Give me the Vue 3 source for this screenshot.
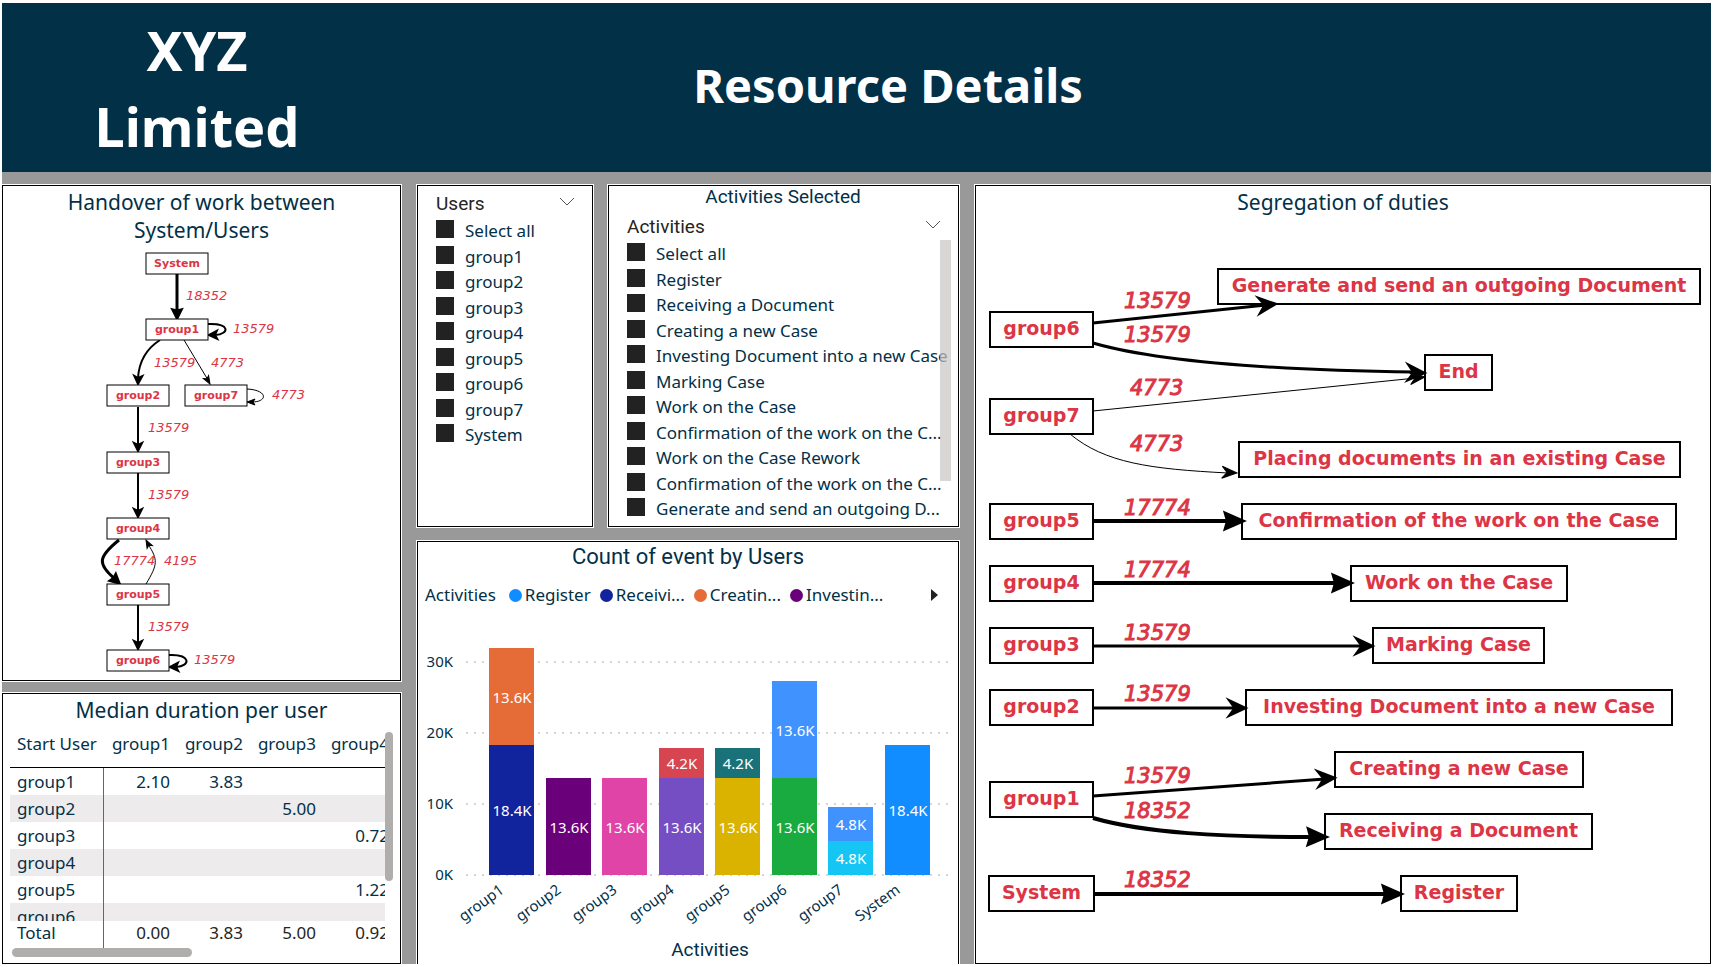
<script setup>
import { ref } from 'vue'

const users = ['Select all', 'group1', 'group2', 'group3', 'group4', 'group5', 'group6', 'group7', 'System']
const activities = [
  'Select all',
  'Register',
  'Receiving a Document',
  'Creating a new Case',
  'Investing Document into a new Case',
  'Marking Case',
  'Work on the Case',
  'Confirmation of the work on the C...',
  'Work on the Case Rework',
  'Confirmation of the work on the C...',
  'Generate and send an outgoing D...',
]
const pickedUsers = ref(users.map((_, i) => i))
const pickedActivities = ref(activities.map((_, i) => i))

// Median duration matrix
const columns = ['group1', 'group2', 'group3', 'group4']
const rows = [
  { name: 'group1', cells: ['2.10', '3.83', '', ''] },
  { name: 'group2', cells: ['', '', '5.00', ''] },
  { name: 'group3', cells: ['', '', '', '0.72'] },
  { name: 'group4', cells: ['', '', '', ''] },
  { name: 'group5', cells: ['', '', '', '1.22'] },
  { name: 'group6', cells: ['', '', '', ''] },
]
const totals = ['0.00', '3.83', '5.00', '0.92']

// Stacked column chart
const legend = [
  { label: 'Register', color: '#118dff' },
  { label: 'Receivi...', color: '#12239e' },
  { label: 'Creatin...', color: '#e66c37' },
  { label: 'Investin...', color: '#6b007b' },
]
const baseY = 875
const perK = 7.11
const stacks = [
  { name: 'group1', parts: [[18.352, '#12239e', '18.4K'], [13.579, '#e66c37', '13.6K']] },
  { name: 'group2', parts: [[13.579, '#6b007b', '13.6K']] },
  { name: 'group3', parts: [[13.579, '#e044a7', '13.6K']] },
  { name: 'group4', parts: [[13.579, '#744ec2', '13.6K'], [4.195, '#d64550', '4.2K']] },
  { name: 'group5', parts: [[13.579, '#d9b300', '13.6K'], [4.195, '#197278', '4.2K']] },
  { name: 'group6', parts: [[13.579, '#1aab40', '13.6K'], [13.579, '#4092ff', '13.6K']] },
  { name: 'group7', parts: [[4.773, '#15c6f4', '4.8K'], [4.773, '#4092ff', '4.8K']] },
  { name: 'System', parts: [[18.352, '#118dff', '18.4K']] },
]
const bars = stacks.map((s, i) => {
  const x = Math.round(489 + i * 56.5)
  let y = baseY
  const parts = s.parts.map(([value, color, label]) => {
    const bottom = y
    y = Math.round(bottom - value * perK)
    return { y, height: bottom - y, color, label, mid: Math.round((y + bottom) / 2) }
  })
  return { name: s.name, x, parts }
})
const ticks = [0, 10, 20, 30].map((k) => ({ label: k + 'K', y: Math.round(baseY - k * perK) }))

// Handover graph
const flowNodes = [
  { t: 'System', x: 146, y: 253, w: 62 },
  { t: 'group1', x: 146, y: 319, w: 62 },
  { t: 'group2', x: 107, y: 385, w: 62 },
  { t: 'group7', x: 185, y: 385, w: 62 },
  { t: 'group3', x: 107, y: 452, w: 62 },
  { t: 'group4', x: 107, y: 518, w: 62 },
  { t: 'group5', x: 107, y: 584, w: 62 },
  { t: 'group6', x: 107, y: 650, w: 62 },
]
const flowEdges = [
  { d: 'M177 274V312', tip: [177, 318], a: 90, w: 3 },
  { d: 'M208 324C230 323 230 334 215 335', tip: [209, 335], a: 178, w: 2 },
  { d: 'M160 340C146 349 139 362 138 378', tip: [138, 384], a: 92, w: 2 },
  { d: 'M184 340L208 380', tip: [210, 384], a: 60, w: 1 },
  { d: 'M247 389C268 390 268 402 252 402', tip: [247, 402], a: 180, w: 1 },
  { d: 'M138 407V445', tip: [138, 451], a: 90, w: 2 },
  { d: 'M138 473V511', tip: [138, 517], a: 90, w: 2 },
  { d: 'M119 540C98 557 97 564 115 579', tip: [119, 583], a: 42, w: 3 },
  { d: 'M146 584C158 564 158 560 148 544', tip: [146, 540], a: 242, w: 1 },
  { d: 'M138 605V643', tip: [138, 649], a: 90, w: 2 },
  { d: 'M169 655C191 654 191 666 176 667', tip: [170, 667], a: 178, w: 2 },
]
const flowLabels = [
  ['18352', 186, 300], ['13579', 233, 333], ['13579', 154, 367], ['4773', 211, 367],
  ['4773', 272, 399], ['13579', 148, 432], ['13579', 148, 499], ['17774', 114, 565],
  ['4195', 164, 565], ['13579', 148, 631], ['13579', 194, 664],
]

// Segregation graph
const dutyNodes = [
  { t: 'group6', x: 990, y: 312, w: 103 },
  { t: 'group7', x: 990, y: 399, w: 103 },
  { t: 'group5', x: 990, y: 504, w: 103 },
  { t: 'group4', x: 990, y: 566, w: 103 },
  { t: 'group3', x: 990, y: 628, w: 103 },
  { t: 'group2', x: 990, y: 690, w: 103 },
  { t: 'group1', x: 990, y: 782, w: 103 },
  { t: 'System', x: 989, y: 876, w: 105 },
  { t: 'Generate and send an outgoing Document', x: 1218, y: 269, w: 482 },
  { t: 'End', x: 1425, y: 355, w: 67 },
  { t: 'Placing documents in an existing Case', x: 1239, y: 442, w: 441 },
  { t: 'Confirmation of the work on the Case', x: 1242, y: 504, w: 434 },
  { t: 'Work on the Case', x: 1351, y: 566, w: 216 },
  { t: 'Marking Case', x: 1373, y: 628, w: 171 },
  { t: 'Investing Document into a new Case', x: 1246, y: 690, w: 426 },
  { t: 'Creating a new Case', x: 1335, y: 752, w: 248 },
  { t: 'Receiving a Document', x: 1325, y: 814, w: 267 },
  { t: 'Register', x: 1401, y: 876, w: 116 },
]
const dutyEdges = [
  { d: 'M1093 323L1266 305', tip: [1275, 304], a: -6, w: 3 },
  { d: 'M1093 343C1155 361 1270 370 1415 372', tip: [1424, 373], a: 2, w: 3 },
  { d: 'M1093 411L1416 378', tip: [1425, 377], a: -6, w: 1 },
  { d: 'M1070 434C1105 463 1150 469 1228 473', tip: [1237, 473], a: 3, w: 1 },
  { d: 'M1093 521H1232', tip: [1242, 521], a: 0, w: 4 },
  { d: 'M1093 583H1340', tip: [1350, 583], a: 0, w: 4 },
  { d: 'M1093 646H1362', tip: [1372, 646], a: 0, w: 3 },
  { d: 'M1093 708H1235', tip: [1245, 708], a: 0, w: 3 },
  { d: 'M1093 796L1325 779', tip: [1334, 778], a: -4, w: 3 },
  { d: 'M1093 818C1145 833 1220 837 1315 837', tip: [1325, 837], a: 1, w: 4 },
  { d: 'M1094 894H1390', tip: [1400, 894], a: 0, w: 4 },
]
const dutyLabels = [
  ['13579', 1124, 308], ['13579', 1124, 342], ['4773', 1130, 395], ['4773', 1130, 451],
  ['17774', 1124, 515], ['17774', 1124, 577], ['13579', 1124, 640], ['13579', 1124, 701],
  ['13579', 1124, 783], ['18352', 1124, 818], ['18352', 1124, 887],
]
const turn = (e) => `translate(${e.tip[0]} ${e.tip[1]}) rotate(${e.a})`
const dutyHeads = {
  1: 'M0 0L-15 -6L-10 0L-15 6Z',
  3: 'M0 0L-15 -7L-10 0L-15 7Z',
  4: 'M0 0L-16 -7L-14 0L-16 7Z',
}
const flowHeads = {
  1: 'M0 0L-8 -3L-6 0L-8 3Z',
  2: 'M0 0L-8 -4L-6 0L-8 4Z',
  3: 'M0 0L-8 -4L-7 0L-8 4Z',
}
</script>

<template>
  <div class="page">
    <header class="banner">
      <p class="company">XYZ<br />Limited</p>
      <h1>Resource Details</h1>
    </header>

    <main class="board">
      <div class="column left">
        <section class="panel">
          <h2>Handover of work between<br />System/Users</h2>
          <svg class="graph" viewBox="3 244 397 436" role="img" aria-label="Handover of work graph">
            <g v-for="(e, i) in flowEdges" :key="i" class="edge" :stroke-width="e.w">
              <path :d="e.d" fill="none" />
              <path :transform="turn(e)" :d="flowHeads[e.w]" />
            </g>
            <g v-for="n in flowNodes" :key="n.t">
              <rect class="node thin" :x="n.x" :y="n.y" :width="n.w" height="21" />
              <text class="node-text small" :x="n.x + n.w / 2" :y="n.y + 14">{{ n.t }}</text>
            </g>
            <text v-for="([t, x, y], i) in flowLabels" :key="'l' + i" class="edge-text small" :x="x" :y="y">{{ t }}</text>
          </svg>
        </section>

        <section class="panel matrix">
          <h2>Median duration per user</h2>
          <div class="matrix-body">
            <div class="clip rows">
              <table>
                <colgroup><col class="first" /><col v-for="c in columns" :key="c" class="val" /></colgroup>
                <thead>
                  <tr><th scope="col">Start User</th><th v-for="c in columns" :key="c" scope="col">{{ c }}</th></tr>
                </thead>
                <tbody>
                  <tr v-for="r in rows" :key="r.name">
                    <th scope="row">{{ r.name }}</th>
                    <td v-for="(c, i) in r.cells" :key="i">{{ c }}</td>
                  </tr>
                </tbody>
              </table>
            </div>
            <div class="clip">
              <table class="total">
                <colgroup><col class="first" /><col v-for="c in columns" :key="c" class="val" /></colgroup>
                <tbody>
                  <tr><th scope="row">Total</th><td v-for="(c, i) in totals" :key="i">{{ c }}</td></tr>
                </tbody>
              </table>
            </div>
            <span class="bar-v"></span>
          </div>
          <div class="bar-h"></div>
        </section>
      </div>

      <div class="column middle">
        <div class="slicers">
          <section class="panel slicer">
            <div class="slicer-head">
              <span>Users</span>
              <button type="button" aria-label="Toggle users"><svg viewBox="0 0 16 9"><path d="M1 1L8 8L15 1" /></svg></button>
            </div>
            <ul>
              <li v-for="(u, i) in users" :key="i">
                <label><input v-model="pickedUsers" type="checkbox" :value="i" />{{ u }}</label>
              </li>
            </ul>
          </section>

          <section class="panel slicer">
            <h3>Activities Selected</h3>
            <div class="slicer-head">
              <span>Activities</span>
              <button type="button" aria-label="Toggle activities"><svg viewBox="0 0 16 9"><path d="M1 1L8 8L15 1" /></svg></button>
            </div>
            <div class="scroller">
              <ul>
                <li v-for="(a, i) in activities" :key="i">
                  <label><input v-model="pickedActivities" type="checkbox" :value="i" />{{ a }}</label>
                </li>
              </ul>
              <span class="track"></span>
            </div>
          </section>
        </div>

        <section class="panel chart">
          <h2 class="din">Count of event by Users</h2>
          <div class="legend">
            <span class="legend-title">Activities</span>
            <span v-for="l in legend" :key="l.label" class="key"><i :style="{ background: l.color }"></i>{{ l.label }}</span>
            <button type="button" aria-label="More"><svg viewBox="0 0 7 12"><path d="M0 0L7 6L0 12Z" /></svg></button>
          </div>
          <svg class="graph" viewBox="418 612 540 352" role="img" aria-label="Count of event by Users">
            <g v-for="t in ticks" :key="t.label">
              <line class="grid" x1="467" x2="950" :y1="t.y" :y2="t.y" />
              <text class="axis" x="453" :y="t.y + 5" text-anchor="end">{{ t.label }}</text>
            </g>
            <g v-for="b in bars" :key="b.name">
              <template v-for="(p, i) in b.parts" :key="i">
                <rect :x="b.x" :y="p.y" width="45" :height="p.height" :fill="p.color" />
                <text class="value" :x="b.x + 23" :y="p.mid + 6">{{ p.label }}</text>
              </template>
              <text class="axis" text-anchor="end" :transform="`translate(${b.x + 16} 892) rotate(-36)`">{{ b.name }}</text>
            </g>
            <text class="axis-title" x="710" y="956">Activities</text>
          </svg>
        </section>
      </div>

      <section class="panel">
        <h2>Segregation of duties</h2>
        <svg class="graph" viewBox="976 216 734 747" role="img" aria-label="Segregation of duties graph">
          <g v-for="n in dutyNodes" :key="n.t">
            <rect class="node" :x="n.x" :y="n.y" :width="n.w" height="35" />
            <text class="node-text" :x="n.x + n.w / 2" :y="n.y + 23">{{ n.t }}</text>
          </g>
          <g v-for="(e, i) in dutyEdges" :key="i" class="edge" :stroke-width="e.w">
            <path :d="e.d" fill="none" />
            <path :transform="turn(e)" :d="dutyHeads[e.w]" />
          </g>
          <text v-for="([t, x, y], i) in dutyLabels" :key="'l' + i" class="edge-text" :x="x" :y="y">{{ t }}</text>
        </svg>
      </section>
    </main>
  </div>
</template>

<style>
body {
  margin: 0;
  background: #fff;
}
</style>

<style scoped>
.page {
  box-sizing: border-box;
  min-height: 100vh;
  padding: 3px 6px 3px 2px;
  display: grid;
  grid-template-rows: auto 1fr;
  font-family: "Noto Sans", "Open Sans", sans-serif;
  color: #023047;
}
h1, h2, h3, p, ul {
  margin: 0;
  padding: 0;
}
.banner {
  display: grid;
  grid-template-columns: 390fr 992fr 327fr;
  align-items: center;
  padding: 9px 0 8px;
  background: #023047;
  color: #fff;
  text-align: center;
  font-weight: 700;
}
.company {
  font-size: 54px;
  line-height: 76px;
}
h1 {
  padding-bottom: 6px;
  font-size: 47px;
  line-height: 68px;
}
.board {
  display: grid;
  grid-template-columns: 399fr 542fr 736fr;
  gap: 16px;
  padding-top: 13px;
  background: #999;
}
.column {
  display: grid;
  min-width: 0;
}
.left {
  grid-template-rows: 496fr 271fr;
  gap: 12px;
}
.middle {
  grid-template-rows: 342fr 423fr;
  gap: 14px;
}
.slicers {
  display: grid;
  grid-template-columns: 176fr 351fr;
  gap: 15px;
}
.panel {
  box-sizing: border-box;
  min-width: 0;
  border: 1px solid #000;
  background: #fff;
  box-shadow: 0 0 0 1px #fff;
}
h2 {
  padding-top: 2px;
  font-size: 21px;
  font-weight: 400;
  line-height: 28px;
  text-align: center;
}
.graph {
  display: block;
  width: 100%;
  height: auto;
}
.node {
  fill: #fff;
  stroke: #000;
  stroke-width: 2;
}
.node.thin {
  stroke-width: 1;
}
.node-text {
  font: 700 19px "DejaVu Sans", sans-serif;
  fill: #dc3545;
  text-anchor: middle;
}
.edge-text {
  font: italic 400 21px "DejaVu Sans", sans-serif;
  fill: #dc3545;
  stroke: #dc3545;
  stroke-width: 1;
}
.node-text.small {
  font-size: 11px;
}
.edge-text.small {
  font-size: 13px;
  stroke: none;
}
.edge {
  stroke: #000;
}

/* Matrix */
.matrix {
  display: flex;
  flex-direction: column;
  padding: 0 7px 6px;
}
.matrix-body {
  position: relative;
  padding: 6px 8px 0 0;
  flex: 1;
  display: flex;
  flex-direction: column;
}
.clip {
  overflow: hidden;
}
.rows {
  flex: 1 1 0;
  min-height: 180px;
}
table {
  width: 386px;
  table-layout: fixed;
  border-collapse: separate;
  border-spacing: 0;
  font-size: 17px;
  line-height: 27px;
}
.first {
  width: 94px;
}
th, td {
  padding: 0 7px 0 0;
  font-weight: 400;
  text-align: right;
  white-space: nowrap;
  height: 27px;
}
th:first-child {
  padding-left: 7px;
  padding-right: 0;
  text-align: left;
}
thead th {
  height: 38px;
  padding-bottom: 10px;
  box-sizing: border-box;
  border-bottom: 1px solid #000;
}
tbody th {
  border-right: 1px solid #666;
}
tbody tr:nth-child(even) {
  background: #edebeb;
}
.total th,
.total td {
  height: 24px;
  padding-bottom: 3px;
  line-height: 24px;
}
.total td {
  color: #252423;
}
.bar-v {
  position: absolute;
  top: 8px;
  right: 0;
  width: 8px;
  height: 149px;
  border-radius: 5px;
  background: #b0aead;
}
.bar-h {
  width: 180px;
  height: 9px;
  margin-left: 2px;
  border-radius: 5px;
  background: #b0aead;
}

/* Slicers */
.slicer {
  padding: 5px 7px 0 18px;
}
h3 {
  margin: -6px 0 5px -12px;
  font: 400 19px/24px Roboto, sans-serif;
  text-align: center;
}
.slicer-head {
  display: flex;
  justify-content: space-between;
  align-items: center;
  padding-right: 10px;
  font: 400 19px/26px Roboto, sans-serif;
  color: #252423;
}
.slicer-head button {
  padding: 0 0 6px;
  border: 0;
  background: none;
}
.slicer-head svg {
  display: block;
  width: 16px;
  height: 9px;
  fill: none;
  stroke: #555;
}
ul {
  padding-top: 1px;
  list-style: none;
  font-size: 17px;
  line-height: 1.5;
}
label {
  display: flex;
  gap: 11px;
  white-space: nowrap;
}
input {
  appearance: none;
  flex: none;
  width: 18px;
  height: 18px;
  margin: 2px 0 0;
  background: #222;
}
.scroller {
  position: relative;
}
.track {
  position: absolute;
  top: 0;
  right: 0;
  width: 11px;
  height: 241px;
  background: rgb(200 198 196 / 70%);
}

/* Chart */
.chart {
  border-bottom: 0;
}
.din {
  padding-top: 1px;
  font-family: Roboto, sans-serif;
  font-size: 22px;
}
.legend {
  display: flex;
  align-items: center;
  gap: 9px;
  padding: 12px 20px 5px 7px;
  font-size: 17px;
  line-height: 24px;
}
.legend-title {
  margin-right: 4px;
}
.key {
  display: flex;
  align-items: center;
  gap: 3px;
}
.key i {
  width: 13px;
  height: 13px;
  border-radius: 50%;
}
.legend button {
  margin-left: auto;
  padding: 0;
  border: 0;
  background: none;
}
.legend svg {
  display: block;
  width: 7px;
  height: 12px;
  fill: #222;
}
.grid {
  stroke: #c8c8c8;
  stroke-width: 2;
  stroke-linecap: round;
  stroke-dasharray: 0 8;
}
.axis {
  font-size: 15px;
  fill: #023047;
}
.value {
  font-size: 15px;
  fill: #fff;
  text-anchor: middle;
}
.axis-title {
  font: 400 19px Roboto, sans-serif;
  fill: #023047;
  text-anchor: middle;
}
</style>
